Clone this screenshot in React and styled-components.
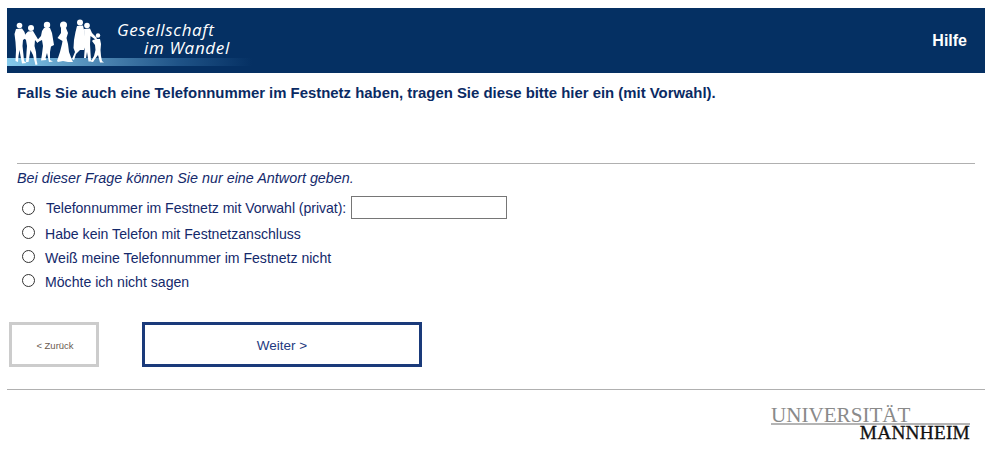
import React from "react";
import styled, { createGlobalStyle } from "styled-components";

const GlobalStyle = createGlobalStyle`
  html, body {
    margin: 0;
    background: #fff;
  }
  body {
    font-family: "Liberation Sans", Arial, sans-serif;
    font-size: 14.1px;
    color: #14296b;
  }
`;

const Page = styled.div`
  width: 978px;
  padding: 8px 13px 0 7px;
`;

const Header = styled.header`
  height: 65px;
  background: #053063;
  display: flex;
  align-items: stretch;
  justify-content: space-between;
`;

const Brand = styled.div`
  width: 238px;
  display: flex;
  padding-left: 7px;
  background: linear-gradient(90deg, #86cbec 0%, #6fb0d6 14%, #4a83b0 40%, #1f5387 70%, #053063 100%) no-repeat left 50px / 100% 8px;
`;

const People = styled.svg`
  width: 92px;
  height: 65px;
  flex: none;
`;

const BrandName = styled.div`
  font-family: "Open Sans", sans-serif;
  font-style: italic;
  font-size: 17px;
  line-height: 18px;
  color: #fff;
  letter-spacing: 0.65px;
  padding: 13px 0 0 11px;
  white-space: nowrap;
`;

const BrandLine = styled.div`
  padding-left: ${(p) => p.$indent || 0}px;
`;

const HelpLink = styled.a`
  color: #fff;
  font-weight: bold;
  font-size: 16px;
  align-self: center;
  margin-right: 18px;
`;

const Question = styled.h1`
  margin: 0;
  padding: 12px 10px 0;
  height: 78px;
  font-size: 14.9px;
  line-height: 16px;
  font-weight: bold;
  color: #0a2a63;
  white-space: nowrap;
`;

const Rule = styled.hr`
  border: 0;
  height: 1px;
  margin: 0 ${(p) => p.$inset || 0}px;
  background: #b0b0b0;
`;

const Hint = styled.p`
  margin: 0;
  padding: 6px 10px 0;
  font-style: italic;
  font-size: 14.35px;
  line-height: 16px;
`;

const Options = styled.div`
  display: flex;
  flex-direction: column;
  padding: 8px 0 0 15px;
`;

const Option = styled.label`
  display: flex;
  align-items: center;
  height: ${(p) => (p.$tall ? 27 : 24)}px;
  margin-bottom: ${(p) => (p.$tall ? 1 : 0)}px;
  gap: ${(p) => (p.$tall ? 11 : 10)}px;
  line-height: 16px;
  letter-spacing: ${(p) => (p.$tall ? "-0.045px" : "normal")};
`;

const Radio = styled.input.attrs({ type: "radio" })`
  appearance: none;
  margin: ${(p) => (p.$tall ? "1px 0 0" : "0 0 4px")};
  width: 13px;
  height: 13px;
  border: 1px solid #333;
  border-radius: 50%;
  background: #fff;
  flex: none;
`;

const PhoneInput = styled.input`
  width: 156px;
  height: 23px;
  box-sizing: border-box;
  border: 1px solid #767676;
  margin-left: -6px;
  padding: 0 4px;
  background: #fff;
`;

const Buttons = styled.div`
  display: flex;
  align-items: flex-start;
  gap: 43px;
  padding: 28px 0 0 2px;
  height: 67px;
`;

const NavButton = styled.button`
  width: ${(p) => (p.$primary ? 280 : 90)}px;
  height: 45px;
  background: #fff;
  border: 3px solid ${(p) => (p.$primary ? "#1a3a7a" : "#cccccc")};
  color: ${(p) => (p.$primary ? "#1f3a80" : "#6a5a50")};
  font-family: "Liberation Sans", Arial, sans-serif;
  font-size: ${(p) => (p.$primary ? 13.5 : 9.5)}px;
  padding: ${(p) => (p.$primary ? "1px 0 0" : "1px 0 0 2px")};
`;

const LogoRow = styled.div`
  display: flex;
  justify-content: flex-end;
  padding: 16px 15px 0 0;
`;

const Logo = styled.div`
  width: 198px;
  font-family: "Liberation Serif", "Times New Roman", serif;
`;

const LogoTop = styled.div`
  font-size: 21.1px;
  line-height: 18px;
  height: 17px;
  margin-left: -1px;
  color: #8a8a8a;
  border-bottom: 2px solid #b4b4b4;
  white-space: nowrap;
`;

const LogoBottom = styled.div`
  font-size: 19.3px;
  line-height: 15px;
  color: #111;
  text-align: right;
  letter-spacing: 0.25px;
  -webkit-text-stroke: 0.3px #111;
`;

// coordinates are page pixels, hence the viewBox offset
const PeopleIcon = () => (
  <People viewBox="14 8 92 65" aria-hidden="true">
    <g fill="#fff">
      <circle cx="19.5" cy="25.5" r="2.8" />
      <path d="M16 29L22 28.500L24.500 32L26 38L23 40L22.500 46L23.500 55L24 61L26.500 63L22 63.500L20.500 56L19.500 50L18.500 56L18 62L15.500 61L16 50L15.500 42L14.500 34Z" />
      <circle cx="31" cy="28" r="3" />
      <path d="M28 31.500L33 31L36 36L39 41L37.500 43L35 40L34.500 46L36 52L36.500 60L37.500 64.500L35.500 65L33 55L30.500 50L29.500 56L28.500 62L26 62L26.500 52L27 46L26 40L24 38L25.500 34Z" />
      <circle cx="47" cy="25" r="3.200" />
      <path d="M44 28L50 28L52 33L54 45L51 46.500L50 52L50 60L53 61.500L49 62L47 53L45.500 58L46.500 60L41 60.500L42 54L43 46L42 40L38 42L37 40.500L41 36L42 31Z" />
      <circle cx="63.500" cy="25" r="3.500" />
      <path d="M61 28L66 28L68 33L66.500 38L68 44L69 52L72 60L73 62L68 62L63 61L58 62L57 61L60 52L62 44L62.500 41L57.500 38L61 33Z" />
      <circle cx="80" cy="22.500" r="3" />
      <path d="M77 26L83 25.500L84.500 32L86 45L84 50L80 50L76 54L74 60L72 59L75 52L73.500 48L74 40L75.500 32Z" />
      <circle cx="87" cy="25.500" r="2.800" />
      <path d="M84 29L90 28.500L92 33L97 38L96 40L90.500 36L90 44L90.500 53L91 60L93.500 61.500L88.500 61.500L87 52L86 58L84 58L85 45Z" />
      <circle cx="98" cy="35.500" r="2.200" />
      <path d="M96 39L100 39L101 44L100.500 50L101 56L102 61L104 62.500L100 62.500L98 55L95 59L93 62L91 61.500L94 56L95.500 50L95 45L92 41L93 40Z" />
    </g>
  </People>
);

export default function App() {
  return (
    <Page>
      <GlobalStyle />
      <Header>
        <Brand>
          <PeopleIcon />
          <BrandName>
            <BrandLine>Gesellschaft</BrandLine>
            <BrandLine $indent={27}>im Wandel</BrandLine>
          </BrandName>
        </Brand>
        <HelpLink>Hilfe</HelpLink>
      </Header>

      <Question>
        Falls Sie auch eine Telefonnummer im Festnetz haben, tragen Sie diese bitte hier ein (mit Vorwahl).
      </Question>
      <Rule $inset={10} />
      <Hint>Bei dieser Frage können Sie nur eine Antwort geben.</Hint>

      <Options>
        <Option $tall>
          <Radio name="festnetz" $tall />
          <span>Telefonnummer im Festnetz mit Vorwahl (privat):</span>
          <PhoneInput type="text" />
        </Option>
        <Option>
          <Radio name="festnetz" />
          <span>Habe kein Telefon mit Festnetzanschluss</span>
        </Option>
        <Option>
          <Radio name="festnetz" />
          <span>Weiß meine Telefonnummer im Festnetz nicht</span>
        </Option>
        <Option>
          <Radio name="festnetz" />
          <span>Möchte ich nicht sagen</span>
        </Option>
      </Options>

      <Buttons>
        <NavButton>&lt; Zurück</NavButton>
        <NavButton $primary>Weiter &gt;</NavButton>
      </Buttons>
      <Rule />

      <LogoRow>
        <Logo>
          <LogoTop>UNIVERSITÄT</LogoTop>
          <LogoBottom>MANNHEIM</LogoBottom>
        </Logo>
      </LogoRow>
    </Page>
  );
}
